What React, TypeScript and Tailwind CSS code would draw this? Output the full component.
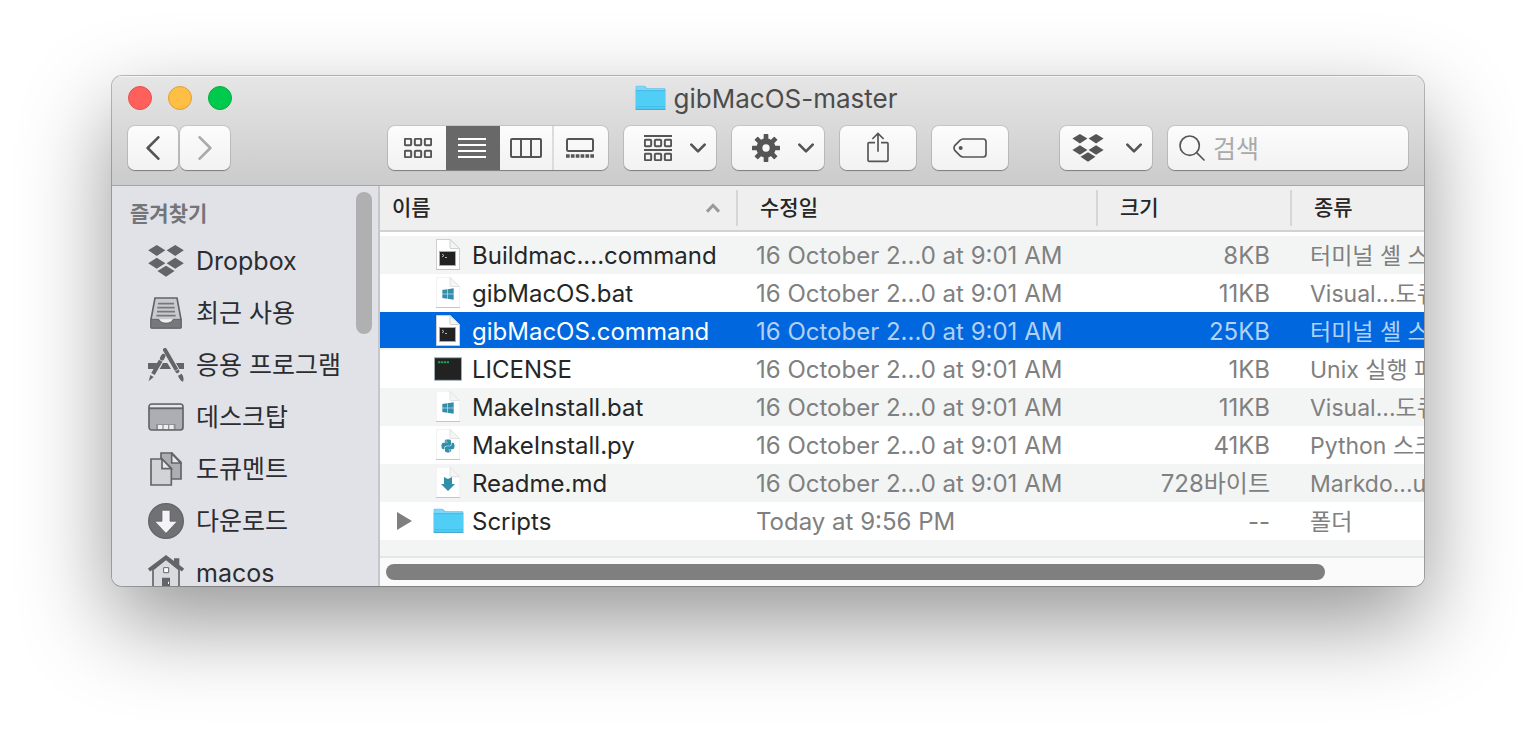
import { useState } from "react";
import type { ReactNode } from "react";
import clsx from "clsx";
import { FaPython, FaWindows } from "react-icons/fa";

type FileKind = "command" | "bat" | "exec" | "py" | "md" | "folder";

interface FileRow {
  name: string;
  date: string;
  size: string;
  kind: string;
  icon: FileKind;
}

const DATE = "16 October 2...0 at 9:01 AM";

const files: FileRow[] = [
  { name: "Buildmac....command", date: DATE, size: "8KB", kind: "터미널 셸 스크립트", icon: "command" },
  { name: "gibMacOS.bat", date: DATE, size: "11KB", kind: "Visual...도큐멘트", icon: "bat" },
  { name: "gibMacOS.command", date: DATE, size: "25KB", kind: "터미널 셸 스크립트", icon: "command" },
  { name: "LICENSE", date: DATE, size: "1KB", kind: "Unix 실행 파일", icon: "exec" },
  { name: "MakeInstall.bat", date: DATE, size: "11KB", kind: "Visual...도큐멘트", icon: "bat" },
  { name: "MakeInstall.py", date: DATE, size: "41KB", kind: "Python 스크립트", icon: "py" },
  { name: "Readme.md", date: DATE, size: "728바이트", kind: "Markdo...ument", icon: "md" },
  { name: "Scripts", date: "Today at 9:56 PM", size: "--", kind: "폴더", icon: "folder" },
];

/* ---------- 아이콘 ---------- */

function DropboxIcon({ className }: { className: string }) {
  return (
    <svg viewBox="0 0 108 97" className={className} fill="currentColor" aria-hidden="true">
      <path d="M0 16 26 0l26 16-26 17zM56 16 82 0l26 16-26 17zM0 55l26-16 26 16-26 17zM56 55l26-16 26 16-26 17zM28 79l26-16 26 16-26 17z" />
    </svg>
  );
}

function RecentsIcon() {
  return (
    <svg viewBox="0 0 96 96" className="h-8 w-8" aria-hidden="true">
      <path d="M15 3h66l12 64v24q0 2-3 2H6q-3 0-3-2V67z" fill="#c9cacf" stroke="#636468" strokeWidth="5" />
      <path d="M3 67h23q5 12 22 12t22-12h23v26H3z" fill="#77787c" stroke="#636468" strokeWidth="3" />
      <path d="M29 67h38q-5 9-19 9t-19-9z" fill="#f0f0f2" />
      <path d="M24 20h48M22 32h52M21 44h54M19 56h58" stroke="#77787c" strokeWidth="5" />
    </svg>
  );
}

function AppsIcon() {
  return (
    <svg viewBox="0 0 108 102" className="h-[34px] w-9" fill="#636468" aria-hidden="true">
      <path d="M0 45h28l-10 18H0zM45 45h13l11 18H35zM84 45h24v18H94z" />
      <path d="M51 6 88 70" stroke="#636468" strokeWidth="12" strokeLinecap="round" />
      <path d="M46 24 42 31" stroke="#636468" strokeWidth="13" strokeLinecap="round" />
      <path d="M38 38 15 78" stroke="#636468" strokeWidth="12" />
      <path d="m7 81 10 6L2 100z" />
      <path d="m90 83 11-6q9 12 4 24-10-4-15-18z" />
      <path d="m80 70 12-7M85 79l13-7" stroke="#e1e2e7" strokeWidth="2" />
    </svg>
  );
}

function DesktopIcon() {
  return (
    <svg viewBox="0 0 108 84" className="h-7 w-9" aria-hidden="true">
      <rect x="3" y="3" width="102" height="78" rx="8" fill="#adaeb3" />
      <path d="M5 6h98v7H5z" fill="#e8e8ec" />
      <path d="M3 16h102" stroke="#636468" strokeWidth="5" />
      <path d="M24 63h59v18H24z" fill="#909196" />
      <path d="M30 66h13v13H30zM47 66h13v13H47zM64 66h13v13H64z" fill="#eeeef0" />
      <rect x="3" y="3" width="102" height="78" rx="8" fill="none" stroke="#636468" strokeWidth="5" />
    </svg>
  );
}

function DocumentsIcon() {
  return (
    <svg viewBox="0 0 96 102" className="h-[34px] w-8" stroke="#636468" strokeWidth="5" aria-hidden="true">
      <path d="M33 3h33l27 28v50H33z" fill="#adaeb3" />
      <path d="M65 4v29h27z" fill="#e8e8ec" />
      <path d="M3 21h33l28 28v50H3z" fill="#d2d3d7" />
      <path d="M36 21v29h28z" fill="#e8e8ec" />
    </svg>
  );
}

function DownloadsIcon() {
  return (
    <svg viewBox="0 0 108 108" className="size-9" aria-hidden="true">
      <circle cx="54" cy="54" r="52" fill="#707175" stroke="#636468" strokeWidth="4" />
      <path d="M42 24q0-2 2-2h20q2 0 2 2v31h18q3 0 1 3L56 89q-2 2-4 0L23 58q-2-3 1-3h18z" fill="#f4f4f6" stroke="#5b5c60" strokeWidth="2" />
    </svg>
  );
}

function HomeIcon() {
  return (
    <svg viewBox="0 0 108 108" className="size-9" aria-hidden="true">
      <path d="M15 44 54 12l39 32v62H15z" fill="#d8dadd" stroke="#636468" strokeWidth="5" />
      <path d="M78 10h16v26H78z" fill="#636468" />
      <path d="M3 45 54 7l51 38" fill="none" stroke="#636468" strokeWidth="11" />
      <path d="M47 38h15v15H47z" fill="#fff" stroke="#636468" strokeWidth="3" />
      <path d="M42 68h24v38H42z" fill="#636468" />
      <path d="M60 80h3v7h-3z" fill="#fff" />
    </svg>
  );
}

function FolderIcon() {
  return (
    <svg viewBox="0 0 93 78" className="h-[26px] w-[31px]" aria-hidden="true">
      <path d="M2 74V5q0-3 3-3h22q3 0 5 3l5 5h51q3 0 3 3v61z" fill="#5fc3ec" />
      <path d="M4 15V6q0-2 2-2h21l8 8h52v3z" fill="#7fd6f8" />
      <path d="M2 17h89v54q0 3-3 3H5q-3 0-3-3z" fill="#50cef6" />
      <path d="M2 17h89M3 65h87" stroke="#3db5e2" strokeWidth="2" />
      <path d="M2 73h89" stroke="#45a3c9" strokeWidth="3" />
    </svg>
  );
}

function DocumentIcon({ faint, children }: { faint?: boolean; children: ReactNode }) {
  return (
    <svg viewBox="0 0 24 32" className="h-8 w-6" aria-hidden="true">
      <path d="M.5.5H14L23.500 9.500V30.500H.5z" fill="#fff" stroke={faint ? "#f3f3f3" : "#cfcfcf"} />
      <path d="M14 .5V9q0 .5.5.500h9z" fill="#f5f5f5" stroke={faint ? "#e2e2e2" : "#d0d0d0"} />
      <path d="M0 30.500h24" stroke="#c4c4c4" />
      {children}
    </svg>
  );
}

function FileIcon({ kind }: { kind: FileKind }) {
  if (kind === "folder") return <FolderIcon />;
  if (kind === "exec") {
    return (
      <svg viewBox="0 0 84 72" className="h-6 w-7" aria-hidden="true">
        <rect x="1" y="2" width="82" height="68" fill="#222" stroke="#a9bcc2" strokeWidth="3" />
        <path d="M12 16h33" stroke="#1fa155" strokeWidth="6" strokeDasharray="7 2" />
      </svg>
    );
  }
  if (kind === "command") {
    return (
      <DocumentIcon>
        <rect x="3.500" y="12.500" width="16" height="14" fill="#222" stroke="#aaa" />
        <path d="m6 15 2 1.500-2 1.500M9 18.500h2" fill="none" stroke="#ddd" strokeWidth=".8" />
      </DocumentIcon>
    );
  }
  return (
    <DocumentIcon faint>
      {kind === "bat" && <FaWindows x="5.500" y="10.500" size="13" color="#338eaa" />}
      {kind === "py" && <FaPython x="4.500" y="9.500" size="15" color="#338eaa" />}
      {kind === "md" && <path d="m8 10 4 2 4-2v7h3l-7 7-7-7h3z" fill="#338eaa" />}
    </DocumentIcon>
  );
}

function ChevronDown() {
  return (
    <svg viewBox="0 0 48 30" className="h-[10px] w-4" aria-hidden="true">
      <path d="m4 5 20 20L44 5" fill="none" stroke="currentColor" strokeWidth="8" strokeLinecap="round" strokeLinejoin="round" />
    </svg>
  );
}

/* 여섯 칸 중 한 줄 */
function Boxes({ y }: { y: number }) {
  return (
    <>
      {[0, 30, 60].map((x) => (
        <rect key={x} x={x + 2.5} y={y + 2.5} width="19" height="19" rx="3" />
      ))}
    </>
  );
}

const viewIcons = [
  {
    label: "아이콘 보기",
    width: "w-[58px] pl-[2px]",
    icon: (
      <svg viewBox="0 0 84 60" className="h-5 w-7" fill="none" stroke="currentColor" strokeWidth="6">
        <Boxes y={0} />
        <Boxes y={36} />
      </svg>
    ),
  },
  {
    label: "목록 보기",
    width: "w-[54px] pr-[2px]",
    icon: (
      <svg viewBox="0 0 84 60" className="h-5 w-7" stroke="currentColor" strokeWidth="6">
        <path d="M0 3h84M0 21h84M0 39h84M0 57h84" />
      </svg>
    ),
  },
  {
    label: "계층 보기",
    width: "w-[52px]",
    icon: (
      <svg viewBox="0 0 96 60" className="h-5 w-8" fill="none" stroke="currentColor" strokeWidth="6">
        <rect x="3" y="3" width="90" height="54" rx="3" />
        <path d="M33 3v54M63 3v54" />
      </svg>
    ),
  },
  {
    label: "갤러리 보기",
    width: "w-[56px] pr-[2px]",
    icon: (
      <svg viewBox="0 0 84 60" className="h-5 w-7" fill="none" stroke="currentColor" strokeWidth="6">
        <rect x="3" y="3" width="78" height="36" rx="4" />
        <path d="M0 54h84" strokeWidth="11" strokeDasharray="11 3.600" />
      </svg>
    ),
  },
];

function GroupIcon() {
  return (
    <svg viewBox="0 0 84 78" className="h-[26px] w-7" fill="none" stroke="currentColor" strokeWidth="6" aria-hidden="true">
      <path d="M0 3h84M0 45h84" />
      <Boxes y={12} />
      <Boxes y={54} />
    </svg>
  );
}

function GearIcon() {
  return (
    <svg viewBox="-42 -42 84 84" className="size-7" fill="currentColor" aria-hidden="true">
      {[0, 45, 90, 135].map((deg) => (
        <rect key={deg} x="-7" y="-42" width="14" height="84" rx="2" transform={`rotate(${deg})`} />
      ))}
      <circle r="29" />
      <circle r="11" fill="#f8f8f8" />
    </svg>
  );
}

function ShareIcon() {
  return (
    <svg viewBox="0 0 66 96" className="h-8 w-[22px]" fill="none" stroke="currentColor" strokeWidth="5" aria-hidden="true">
      <path d="M24 32H6q-3 0-3 3v50q0 3 3 3h54q3 0 3-3V35q0-3-3-3H42M33 59V4M16 21 33 4l17 17" />
    </svg>
  );
}

function TagIcon() {
  return (
    <svg viewBox="0 0 102 60" className="h-5 w-[34px]" fill="none" stroke="currentColor" strokeWidth="5" aria-hidden="true">
      <path d="M30 3h61q8 0 8 8v38q0 8-8 8H30q-5 0-9-4L6 38q-6-8 0-16L21 7q4-4 9-4z" />
      <circle cx="23" cy="30" r="6" fill="currentColor" stroke="none" />
    </svg>
  );
}

/* ---------- 툴바 ---------- */

const buttonBase =
  "flex h-11 items-center rounded-[7px] bg-linear-to-b from-[#fcfcfc] to-[#f2f2f2] text-[#555] shadow-[0_0_0_1px_#00000018,0_1px_1px_#00000055]";

function ToolbarButton({ label, className, children }: { label: string; className: string; children: ReactNode }) {
  return (
    <button type="button" aria-label={label} className={clsx(buttonBase, className)}>
      {children}
    </button>
  );
}

function Toolbar() {
  const [view, setView] = useState(1);

  return (
    <div className="flex px-4">
      <div className="flex gap-[2px]">
        <ToolbarButton label="뒤로" className="w-[50px] justify-center">
          <svg viewBox="0 0 42 72" className="h-6 w-[14px]" fill="none" stroke="currentColor" strokeWidth="8" strokeLinecap="round" strokeLinejoin="round">
            <path d="M37 4 5 36l32 32" />
          </svg>
        </ToolbarButton>
        <ToolbarButton label="앞으로" className="w-[50px] justify-center">
          <svg viewBox="0 0 42 72" className="h-6 w-[14px] text-[#aaa]" fill="none" stroke="currentColor" strokeWidth="8" strokeLinecap="round" strokeLinejoin="round">
            <path d="m5 4 32 32L5 68" />
          </svg>
        </ToolbarButton>
      </div>

      <div className={clsx(buttonBase, "ml-[158px] overflow-hidden")}>
        {viewIcons.map((item, i) => (
          <button
            key={item.label}
            type="button"
            aria-label={item.label}
            aria-pressed={view === i}
            onClick={() => setView(i)}
            className={clsx(
              "flex h-full items-center justify-center",
              item.width,
              view === i && "bg-[#686868] text-white",
              i === 3 && "border-l-2 border-[#dcdcdc]"
            )}
          >
            {item.icon}
          </button>
        ))}
      </div>

      <div className="ml-4 flex gap-4">
        <ToolbarButton label="그룹" className="w-[92px] justify-between pr-[10px] pl-5">
          <GroupIcon />
          <ChevronDown />
        </ToolbarButton>
        <ToolbarButton label="동작" className="w-[92px] justify-between pr-[10px] pl-5">
          <GearIcon />
          <ChevronDown />
        </ToolbarButton>
        <ToolbarButton label="공유" className="w-[76px] justify-center">
          <ShareIcon />
        </ToolbarButton>
        <ToolbarButton label="태그" className="w-[76px] justify-center">
          <TagIcon />
        </ToolbarButton>
      </div>

      <div className="ml-[52px] flex flex-1 gap-4">
        <ToolbarButton label="Dropbox" className="w-[92px] justify-between pr-[10px] pl-3">
          <DropboxIcon className="h-7 w-8" />
          <ChevronDown />
        </ToolbarButton>
        <label className={clsx(buttonBase, "flex-1 gap-2 pl-[11px]")}>
          <svg viewBox="0 0 78 78" className="size-[26px] shrink-0" fill="none" stroke="currentColor" strokeWidth="5" aria-hidden="true">
            <circle cx="32" cy="32" r="29" />
            <path d="m53 53 22 22" strokeLinecap="round" />
          </svg>
          <input
            type="search"
            aria-label="검색"
            placeholder="검색"
            className="w-full min-w-0 bg-transparent pt-[2px] text-[25px] leading-8 text-[#262626] outline-none placeholder:text-[#aaa]"
          />
        </label>
      </div>
    </div>
  );
}

/* ---------- 사이드바 ---------- */

const places = [
  { name: "Dropbox", icon: <DropboxIcon className="h-8 w-9 text-[#636468]" /> },
  { name: "최근 사용", icon: <RecentsIcon /> },
  { name: "응용 프로그램", icon: <AppsIcon /> },
  { name: "데스크탑", icon: <DesktopIcon /> },
  { name: "도큐멘트", icon: <DocumentsIcon /> },
  { name: "다운로드", icon: <DownloadsIcon /> },
  { name: "macos", icon: <HomeIcon /> },
];

function Sidebar() {
  return (
    <nav className="relative w-[268px] shrink-0 overflow-hidden border-r-2 border-[#c6c7ca] bg-[#e1e2e7] contain-size">
      <h2 className="pt-[14px] pb-[7px] pl-[18px] text-[21px] leading-7 font-bold text-[#747579]">즐겨찾기</h2>
      <ul>
        {places.map((place) => (
          <li key={place.name}>
            <a href="#" className="flex h-[52px] items-center gap-3 pl-9 text-[25px] whitespace-nowrap text-[#2c2d31]">
              <span className="flex w-9 shrink-0 justify-center">{place.icon}</span>
              <span className="pt-[2px]">{place.name}</span>
            </a>
          </li>
        ))}
      </ul>
      <div className="absolute top-[6px] right-[6px] h-[142px] w-4 rounded-full bg-[#b0b0b2]" />
    </nav>
  );
}

/* ---------- 파일 목록 ---------- */

const headCell = "h-[44px] p-0 text-left font-medium";
const headLabel = "flex h-9 items-center justify-between border-r-2 border-[#d6d6d6]";
const bodyCell = "p-0 pt-[2px] leading-9";

function FileTable() {
  const [selected, setSelected] = useState("gibMacOS.command");

  return (
    <table className="w-full table-fixed border-collapse">
      <colgroup>
        <col className="w-[358px]" />
        <col className="w-[360px]" />
        <col className="w-[194px]" />
        <col />
      </colgroup>
      <thead className="bg-[#efefef] text-[21px] text-[#262626] shadow-[0_2px_0_#d2d2d2]">
        <tr>
          <th className={headCell}>
            <div className={clsx(headLabel, "pr-4 pl-3")}>
              이름
              <svg viewBox="0 0 42 30" className="h-[10px] w-[14px]" fill="none" stroke="#999" strokeWidth="9" aria-hidden="true">
                <path d="M3 26 21 7l18 19" />
              </svg>
            </div>
          </th>
          <th className={headCell}>
            <div className={clsx(headLabel, "pl-[22px]")}>수정일</div>
          </th>
          <th className={headCell}>
            <div className={clsx(headLabel, "pl-[22px]")}>크기</div>
          </th>
          <th className={headCell}>
            <div className="flex h-9 items-center pl-[22px]">종류</div>
          </th>
        </tr>
      </thead>
      <tbody className="text-[24px] whitespace-nowrap text-[#808080]">
        <tr>
          <td colSpan={4} className="h-[6px] p-0" />
        </tr>
        {files.map((file, i) => {
          const active = file.name === selected;
          return (
            <tr
              key={file.name}
              onClick={() => setSelected(file.name)}
              className={clsx(
                active ? "bg-[#0067de] text-[#b2d1f5] shadow-[inset_0_-2px_0_#f3f5f5]" : i % 2 === 0 && "bg-[#f3f5f5]"
              )}
            >
              <td className="p-0">
                <div className={clsx("flex h-[38px] items-center", active ? "text-white" : "text-[#262626]")}>
                  <span className="flex w-[52px] shrink-0 pl-[17px]">
                    {file.icon === "folder" && (
                      <button type="button" aria-label="펼치기">
                        <svg viewBox="0 0 15 18" className="h-[18px] w-[15px]" fill="#7f7f7f">
                          <path d="M0 0v18l15-9z" />
                        </svg>
                      </button>
                    )}
                  </span>
                  <span className="mr-2 flex w-8 shrink-0 justify-center">
                    <FileIcon kind={file.icon} />
                  </span>
                  <span className="pt-[2px]">{file.name}</span>
                </div>
              </td>
              <td className={clsx(bodyCell, "pl-[18px]")}>{file.date}</td>
              <td className={clsx(bodyCell, "pr-[22px] text-right")}>{file.size}</td>
              <td className={clsx(bodyCell, "overflow-hidden pl-[18px] text-[23px]")}>{file.kind}</td>
            </tr>
          );
        })}
        <tr className="bg-[#f3f5f5]">
          <td colSpan={4} className="h-4 p-0" />
        </tr>
      </tbody>
    </table>
  );
}

export default function App() {
  return (
    <div className="min-h-screen bg-white px-28 pt-[76px] pb-[148px] font-[Inter,'Noto_Sans_CJK_KR',sans-serif]">
      <main className="overflow-hidden rounded-[10px] shadow-[0_0_0_1px_#00000040,0_36px_90px_#0000006b]">
        <header className="border-b border-[#a5a5a5] bg-linear-to-b from-[#e6e6e6] to-[#cbcbcb] pt-[9px] pb-[15px] shadow-[inset_0_1px_0_#f5f5f5]">
          <div className="mb-[15px] grid h-[26px] grid-cols-[1fr_auto_1fr] items-center px-4">
            <div className="flex gap-4">
              <button type="button" aria-label="닫기" className="size-6 rounded-full border border-[#e2504c] bg-[#ff605c]" />
              <button type="button" aria-label="최소화" className="size-6 rounded-full border border-[#dfa034] bg-[#ffbe44]" />
              <button type="button" aria-label="확대" className="size-6 rounded-full border border-[#06ab3c] bg-[#00ca4e]" />
            </div>
            <div className="flex items-center gap-2 pr-1">
              <FolderIcon />
              <h1 className="pt-[2px] text-[26px] leading-6 text-[#4c4c4c]">gibMacOS-master</h1>
            </div>
          </div>
          <Toolbar />
        </header>

        <div className="flex">
          <Sidebar />
          <section className="min-w-0 flex-1 overflow-hidden bg-white">
            <FileTable />
            <div className="border-t-2 border-[#e6e6e6] bg-[#fafafa] px-[6px] py-[6px]">
              <div className="h-4 w-[91%] rounded-full bg-[#7f7f7f]" />
            </div>
          </section>
        </div>
      </main>
    </div>
  );
}
